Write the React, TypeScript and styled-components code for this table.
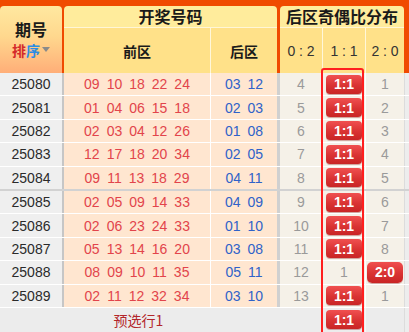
import styled, { createGlobalStyle } from "styled-components";

const GlobalStyle = createGlobalStyle`
  html, body {
    margin: 0;
    padding: 0;
    background: #fff;
  }
  body {
    font-family: "Liberation Sans", "Noto Sans CJK SC", Arial, sans-serif;
    font-size: 14px;
    overflow: hidden;
  }
`;

const Page = styled.div`
  width: 409px;
  height: 332px;
  overflow: hidden;
  background: #ececec;
`;

const Header = styled.div`
  display: flex;
  background: #f04a00;
  padding-top: 6px;
  height: 67px;
`;

const QiHead = styled.div`
  width: 62px;
  margin-right: 2px;
  border-radius: 4px 4px 0 0;
  background: linear-gradient(#ffe8a0, #ffd88e 45%, #ffae78);
  display: flex;
  flex-direction: column;
  align-items: center;
  justify-content: center;
  gap: 2px;
`;

const QiTitle = styled.div`
  font-family: "Noto Sans CJK SC", sans-serif;
  font-weight: bold;
  font-size: 16px;
  line-height: 20px;
  color: #1a1a1a;
  margin-top: -2px;
`;

const Sort = styled.div`
  display: flex;
  align-items: center;
  font-family: "Noto Sans CJK SC", sans-serif;
  font-weight: bold;
  font-size: 14px;
  line-height: 18px;
`;

const SortChar = styled.span<{ $c: string }>`
  color: ${(p) => p.$c};
`;

const Caret = styled.span`
  width: 0;
  height: 0;
  margin-left: 2px;
  border-left: 4px solid transparent;
  border-right: 4px solid transparent;
  border-top: 5px solid #8a8a8a;
`;

const Group = styled.div<{ $w: number; $gap: number }>`
  width: ${(p) => p.$w}px;
  margin-right: ${(p) => p.$gap}px;
  display: flex;
  flex-direction: column;
`;

const GroupTitle = styled.div`
  height: 21px;
  border-radius: 4px 4px 0 0;
  border-bottom: 1px solid #fff6d6;
  background: #ffec9c;
  font-family: "Noto Sans CJK SC", sans-serif;
  font-weight: bold;
  font-size: 16px;
  line-height: 21px;
  color: #1a1a1a;
  text-align: center;
`;

const SubRow = styled.div`
  flex: 1;
  display: flex;
  background: #ffe189;
`;

const SubCell = styled.div<{ $w?: number; $line?: boolean }>`
  width: ${(p) => (p.$w ? `${p.$w}px` : "auto")};
  flex: ${(p) => (p.$w ? "none" : "1")};
  border-right: ${(p) => (p.$line ? "1px solid #fff7da" : "none")};
  display: flex;
  align-items: center;
  justify-content: center;
  font-family: "Noto Sans CJK SC", sans-serif;
  font-weight: bold;
  font-size: 14px;
  color: #1a1a1a;
`;

const RatioHead = styled(SubCell)`
  font-family: "Liberation Sans", sans-serif;
  font-weight: normal;
  font-size: 14px;
  color: #333;
  white-space: pre;
`;

const Body = styled.div`
  position: relative;
`;

const Row = styled.div<{ $sep?: boolean; $h: number }>`
  display: flex;
  height: ${(p) => p.$h}px;
  box-sizing: border-box;
  border-bottom: ${(p) => (p.$sep ? "2px solid #d2d2d2" : "1px solid #fff")};
`;

const IssueCell = styled.div`
  width: 62px;
  border-right: 2px solid #c6c6c6;
  background: #efefef;
  color: #2a2a2a;
  display: flex;
  align-items: center;
  justify-content: center;
`;

const NumCell = styled.div<{ $w: number; $edge: string }>`
  width: ${(p) => p.$w}px;
  border-right: ${(p) => p.$edge};
  background: #ffe6d0;
  display: flex;
  align-items: center;
  justify-content: center;
  gap: 7px;
`;

const Ball = styled.span<{ $blue?: boolean }>`
  color: ${(p) => (p.$blue ? "#2f62c9" : "#e2444b")};
`;

const RatioCell = styled.div<{ $w: number; $line?: boolean }>`
  width: ${(p) => p.$w}px;
  border-right: ${(p) => (p.$line ? "1px solid #fff" : "none")};
  background: #f5f1e8;
  color: #9a9a9a;
  display: flex;
  align-items: center;
  justify-content: center;
`;

const Strip = styled.div`
  flex: 1;
  background: #ededed;
  border-left: 1px solid #dcdcdc;
`;

const Pill = styled.span<{ $wide?: boolean }>`
  width: 36px;
  height: ${(p) => (p.$wide ? 21 : 19)}px;
  border-radius: ${(p) => (p.$wide ? 5 : 4)}px;
  background: linear-gradient(#f05050, #d93333 55%, #c92525);
  color: #fff;
  font-weight: bold;
  font-size: 14px;
  display: flex;
  align-items: center;
  justify-content: center;
  box-shadow: 0 1px 0 rgba(150, 30, 30, 0.35);
`;

const Footer = styled.div`
  display: flex;
  height: 24px;
  background: #ececec;
`;

const FooterLabel = styled.div`
  width: 280px;
  display: flex;
  align-items: center;
  justify-content: center;
  color: #b3262a;
  font-family: "Noto Sans CJK SC", sans-serif;
  font-size: 14px;
  padding-right: 3px;
  box-sizing: border-box;
`;

const FootCell = styled.div<{ $w: number; $line?: boolean }>`
  width: ${(p) => p.$w}px;
  border-right: ${(p) => (p.$line ? "1px solid #f6f6f6" : "none")};
  display: flex;
  align-items: center;
  justify-content: center;
`;

const Highlight = styled.div`
  position: absolute;
  left: 321px;
  top: -5px;
  width: 39px;
  bottom: -6px;
  border: 2px solid #ff1f1f;
  border-radius: 3px;
  pointer-events: none;
`;

type Draw = {
  issue: string;
  front: string[];
  back: string[];
  r02: string;
  r11: string | null;
  r20: string | null;
};

const draws: Draw[] = [
  { issue: "25080", front: ["09", "10", "18", "22", "24"], back: ["03", "12"], r02: "4", r11: null, r20: "1" },
  { issue: "25081", front: ["01", "04", "06", "15", "18"], back: ["02", "03"], r02: "5", r11: null, r20: "2" },
  { issue: "25082", front: ["02", "03", "04", "12", "26"], back: ["01", "08"], r02: "6", r11: null, r20: "3" },
  { issue: "25083", front: ["12", "17", "18", "20", "34"], back: ["02", "05"], r02: "7", r11: null, r20: "4" },
  { issue: "25084", front: ["09", "11", "13", "18", "29"], back: ["04", "11"], r02: "8", r11: null, r20: "5" },
  { issue: "25085", front: ["02", "05", "09", "14", "33"], back: ["04", "09"], r02: "9", r11: null, r20: "6" },
  { issue: "25086", front: ["02", "06", "23", "24", "33"], back: ["01", "10"], r02: "10", r11: null, r20: "7" },
  { issue: "25087", front: ["05", "13", "14", "16", "20"], back: ["03", "08"], r02: "11", r11: null, r20: "8" },
  { issue: "25088", front: ["08", "09", "10", "11", "35"], back: ["05", "11"], r02: "12", r11: "1", r20: null },
  { issue: "25089", front: ["02", "11", "12", "32", "34"], back: ["03", "10"], r02: "13", r11: null, r20: "1" },
];

export default function App() {
  return (
    <Page>
      <GlobalStyle />
      <Header>
        <QiHead>
          <QiTitle>期号</QiTitle>
          <Sort>
            <SortChar $c="#d42a2a">排</SortChar>
            <SortChar $c="#2b8de3">序</SortChar>
            <Caret />
          </Sort>
        </QiHead>
        <Group $w={213} $gap={3}>
          <GroupTitle>开奖号码</GroupTitle>
          <SubRow>
            <SubCell $w={146} $line>
              前区
            </SubCell>
            <SubCell>后区</SubCell>
          </SubRow>
        </Group>
        <Group $w={124} $gap={0}>
          <GroupTitle>后区奇偶比分布</GroupTitle>
          <SubRow>
            <RatioHead $w={42} $line>
              {"0 : 2"}
            </RatioHead>
            <RatioHead $w={42} $line>
              {"1 : 1"}
            </RatioHead>
            <RatioHead>{"2 : 0"}</RatioHead>
          </SubRow>
        </Group>
      </Header>
      <Body>
        {draws.map((d, i) => (
          <Row key={d.issue} $sep={i === 4} $h={i === 4 ? 24.4 : 23.4}>
            <IssueCell>{d.issue}</IssueCell>
            <NumCell $w={146} $edge="1px solid #fff">
              {d.front.map((n, k) => (
                <Ball key={k}>{n}</Ball>
              ))}
            </NumCell>
            <NumCell $w={66} $edge="3px solid #d0d0d0">
              {d.back.map((n, k) => (
                <Ball key={k} $blue>
                  {n}
                </Ball>
              ))}
            </NumCell>
            <RatioCell $w={42} $line>
              {d.r02}
            </RatioCell>
            <RatioCell $w={42} $line>
              {d.r11 ?? <Pill>1:1</Pill>}
            </RatioCell>
            <RatioCell $w={38}>{d.r20 ?? <Pill $wide>2:0</Pill>}</RatioCell>
            <Strip />
          </Row>
        ))}
        <Footer>
          <FooterLabel>预选行1</FooterLabel>
          <FootCell $w={42} $line />
          <FootCell $w={42} $line>
            <Pill>1:1</Pill>
          </FootCell>
          <FootCell $w={38} />
          <Strip />
        </Footer>
        <Highlight />
      </Body>
    </Page>
  );
}
